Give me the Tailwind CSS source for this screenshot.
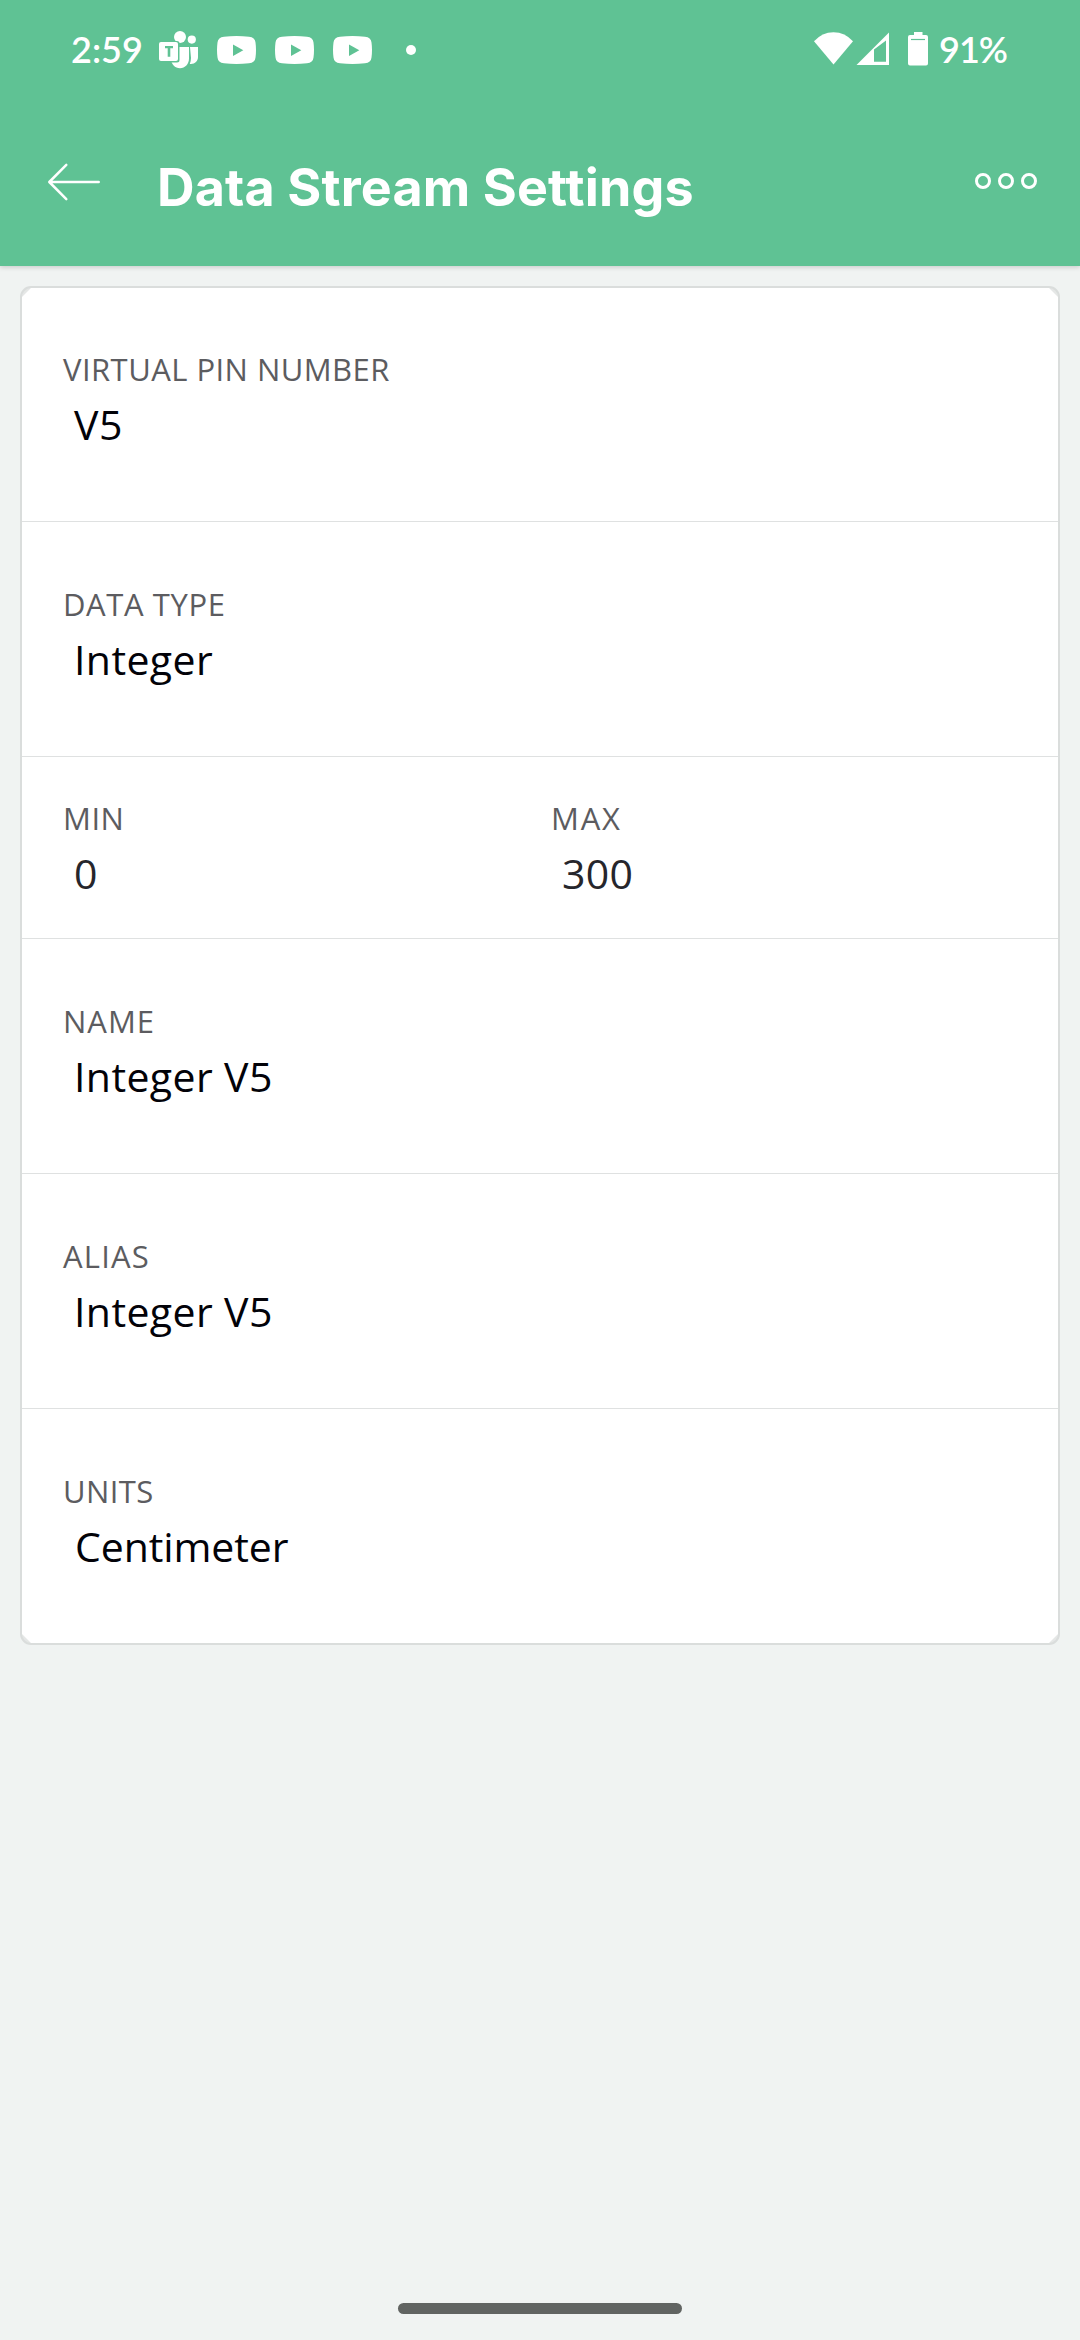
<!DOCTYPE html>
<html lang="en">
<head>
<meta charset="utf-8">
<title>Data Stream Settings</title>
<script src="https://cdn.jsdelivr.net/npm/@tailwindcss/browser@4"></script>
</head>
<body class="flex h-[2340px] w-[1080px] flex-col overflow-hidden bg-[#f0f3f2] font-['Open_Sans',sans-serif]">
<header class="h-[266px] shrink-0 bg-[#5fc294] text-white shadow-[0_1px_5px_rgba(0,0,0,0.18)]">
  <!-- status bar -->
  <div class="flex h-[100px] items-center pr-[74px] pl-[71px] font-['Lato',sans-serif] text-[36px] leading-[50px] font-semibold">
    <span class="mb-[2px] w-[88px] whitespace-nowrap">2:59</span>
    <svg class="h-[40px] w-[40px]" viewBox="159 30 40 40" fill="#fff">
      <circle cx="180" cy="37" r="6"/><circle cx="191.8" cy="39.6" r="4.1"/>
      <path d="M190 47h8v10c0 4-3 7-7 7h-1.200c.8-2 1.200-4 1.200-6z"/>
      <path d="M171 47h18v11.500c0 5.500-4 9.700-9 9.700s-9-4-9-9.700z"/>
      <rect x="158" y="41" width="21.500" height="21.500" rx="2.500" fill="#5fc294"/>
      <rect x="159" y="42" width="19" height="19" rx="2"/>
      <path d="M165 46h8v2.200h-2.700v8.500h-2.600v-8.500H165z" fill="#5fc294"/>
    </svg>
    <svg class="ml-[18px] h-[28px] w-[39px]" viewBox="0 0 39 28"><path d="M7 .7Q19.500-.7 32 .7Q38 1.200 38.500 6.500Q39.500 14 38.500 21.500Q38 26.800 32 27.300Q19.500 28.700 7 27.300Q1 26.800.5 21.500Q-.5 14 .5 6.500Q1 1.200 7 .7z" fill="#fff"/><path d="M16 8.500L26.300 14.200L16 20z" fill="#5fc294"/></svg>
    <svg class="ml-[19px] h-[28px] w-[39px]" viewBox="0 0 39 28"><path d="M7 .7Q19.500-.7 32 .7Q38 1.200 38.500 6.500Q39.500 14 38.500 21.500Q38 26.800 32 27.300Q19.500 28.700 7 27.300Q1 26.800.5 21.500Q-.5 14 .5 6.500Q1 1.200 7 .7z" fill="#fff"/><path d="M16 8.500L26.300 14.200L16 20z" fill="#5fc294"/></svg>
    <svg class="ml-[19px] h-[28px] w-[39px]" viewBox="0 0 39 28"><path d="M7 .7Q19.500-.7 32 .7Q38 1.200 38.500 6.500Q39.500 14 38.500 21.500Q38 26.800 32 27.300Q19.500 28.700 7 27.300Q1 26.800.5 21.500Q-.5 14 .5 6.500Q1 1.200 7 .7z" fill="#fff"/><path d="M16 8.500L26.300 14.200L16 20z" fill="#5fc294"/></svg>
    <span class="ml-[34px] size-[10px] rounded-full bg-white"></span>
    <svg class="ml-auto h-[40px] w-[116px]" viewBox="813 30 116 40" fill="#fff">
      <path d="M833.500 64.500L814 41.300Q822 32.200 833.500 32.200T853 41.300z"/>
      <path fill-rule="evenodd" d="M856.500 65L889 32.500V65zM874 49.500V61.800H886V40.500z"/>
      <path d="M914 35V32h8.500v3h3.500q2 0 2 2v26.500q0 2-2 2h-16q-2 0-2-2V37q0-2 2-2z"/>
      <path d="M911 39.500h14" stroke="#5fc294" stroke-width="1.200"/>
    </svg>
    <span class="mb-[2px] ml-[10px] w-[67px] tracking-[-1px] whitespace-nowrap">91%</span>
  </div>
  <!-- title bar -->
  <div class="flex h-[164px] items-center pr-[42px] pl-[47px]">
    <svg class="h-[40px] w-[54px]" viewBox="47 162 54 40" fill="none" stroke="#fff" stroke-width="2.500" stroke-linecap="round" stroke-linejoin="round"><path d="M98.700 182H49.500M66.300 164.800L49.300 182L66.300 199.200"/></svg>
    <h1 class="mt-[12px] ml-[56px] font-['Inter',sans-serif] text-[52px] leading-[64px] font-bold tracking-[0.150px] whitespace-nowrap">Data Stream Settings</h1>
    <svg class="ml-auto h-[20px] w-[64px]" viewBox="974 172 64 20" fill="none" stroke="#fff" stroke-width="3"><circle cx="983" cy="181" r="6.500"/><circle cx="1006" cy="181" r="6.500"/><circle cx="1029" cy="181" r="6.500"/></svg>
  </div>
</header>
<main class="mx-[20px] mt-[20px] h-[1359px] rounded-[11px] border-2 border-[#dadddc] bg-[#e5e7e6] text-[41px] leading-[56px] text-[#020208]">
  <div class="h-[1355px] bg-white [clip-path:polygon(9px_0,calc(100%-9px)_0,100%_9px,100%_calc(100%-9px),calc(100%-9px)_100%,9px_100%,0_calc(100%-9px),0_9px)]">
    <section class="h-[234px] border-b border-[#dfe1e1] pt-[59px] pl-[41px]">
      <p class="text-[31px] leading-[44px] tracking-[0.450px] text-[#5c5c60]">VIRTUAL PIN NUMBER</p>
      <p class="mt-[5px] pl-[11px] tracking-[0.500px]">V5</p>
    </section>
    <section class="h-[235px] border-b border-[#dfe1e1] pt-[60px] pl-[41px]">
      <p class="text-[31px] leading-[44px] tracking-[0.600px] text-[#5c5c60]">DATA TYPE</p>
      <p class="mt-[5px] pl-[11px] tracking-[0.400px]">Integer</p>
    </section>
    <section class="grid h-[182px] grid-cols-[488px_1fr] border-b border-[#dfe1e1] pt-[39px] pl-[41px]">
      <div>
        <p class="text-[31px] leading-[44px] tracking-[0.500px] text-[#5c5c60]">MIN</p>
        <p class="mt-[5px] pl-[11px] text-[#26262c]">0</p>
      </div>
      <div>
        <p class="text-[31px] leading-[44px] tracking-[1.800px] text-[#5c5c60]">MAX</p>
        <p class="mt-[5px] pl-[11px] tracking-[0.300px] text-[#26262c]">300</p>
      </div>
    </section>
    <section class="h-[235px] border-b border-[#dfe1e1] pt-[60px] pl-[41px]">
      <p class="text-[31px] leading-[44px] tracking-[1px] text-[#5c5c60]">NAME</p>
      <p class="mt-[5px] pl-[11px] tracking-[0.400px]">Integer V5</p>
    </section>
    <section class="h-[235px] border-b border-[#dfe1e1] pt-[60px] pl-[41px]">
      <p class="text-[31px] leading-[44px] tracking-[1.200px] text-[#5c5c60]">ALIAS</p>
      <p class="mt-[5px] pl-[11px] tracking-[0.400px]">Integer V5</p>
    </section>
    <section class="h-[234px] pt-[60px] pl-[41px]">
      <p class="text-[31px] leading-[44px] tracking-[0.400px] text-[#5c5c60]">UNITS</p>
      <p class="mt-[5px] pl-[12px] tracking-[-0.100px]">Centimeter</p>
    </section>
  </div>
</main>
<div class="mx-auto mt-auto mb-[26px] h-[11px] w-[284px] rounded-full bg-[#616462]"></div>
</body>
</html>
